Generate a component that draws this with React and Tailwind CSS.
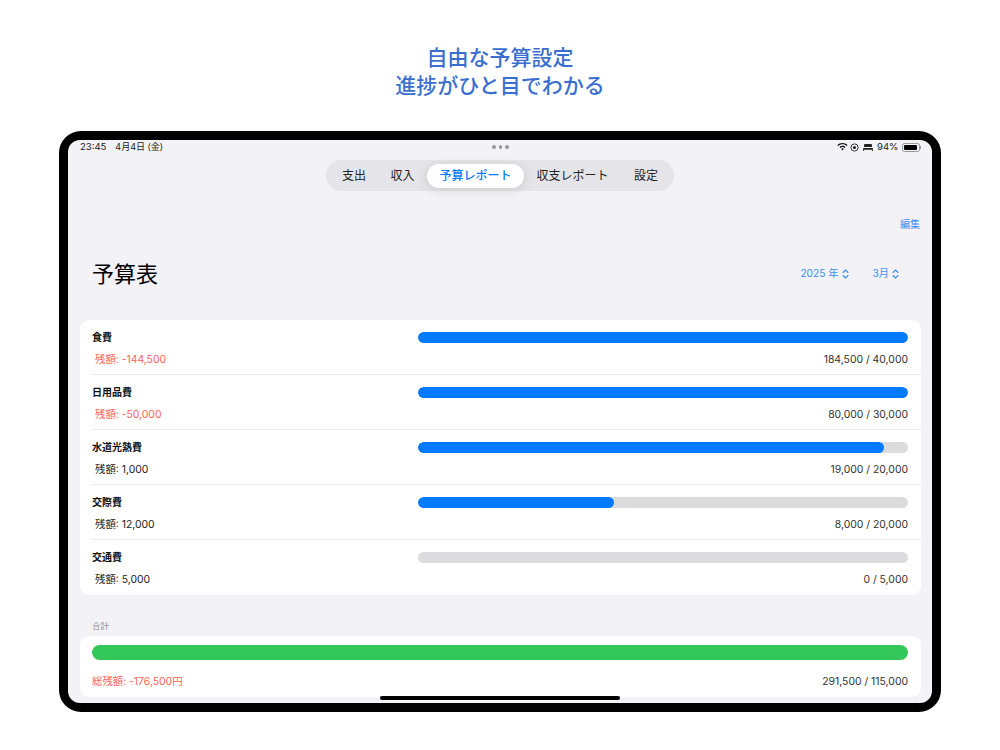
const sans = 'font-["Inter","Noto_Sans_CJK_JP",sans-serif]';

const rows = [
  { name: '食費', left: '残額: -144,500', amount: '184,500 / 40,000', pct: 100, over: true },
  { name: '日用品費', left: '残額: -50,000', amount: '80,000 / 30,000', pct: 100, over: true },
  { name: '水道光熱費', left: '残額: 1,000', amount: '19,000 / 20,000', pct: 95 },
  { name: '交際費', left: '残額: 12,000', amount: '8,000 / 20,000', pct: 40 },
  { name: '交通費', left: '残額: 5,000', amount: '0 / 5,000', pct: 0 },
];

const tabs = [
  { label: '支出', width: 'w-[48px]' },
  { label: '収入', width: 'w-[49px]' },
  { label: '予算レポート', width: 'w-[97px]', active: true },
  { label: '収支レポート', width: 'w-[97px]' },
  { label: '設定', width: 'w-[50px]' },
];

function UpDown() {
  return (
    <svg width="7" height="10" viewBox="0 0 7 10" fill="none" stroke="#3d8fef" strokeWidth="1.1" strokeLinecap="round" strokeLinejoin="round">
      <path d="M1 3.5 3.5 1 6 3.5" />
      <path d="M1 6.5 3.5 9 6 6.5" />
    </svg>
  );
}

function StatusIcons() {
  return (
    <div className="flex items-center justify-end text-[10px] leading-none text-[#222]">
      <svg width="11" height="8" viewBox="0 0 12 9" fill="#111">
        <path d="M6 0C3.8 0 1.8.8.2 2.3l1 1.1C2.5 2.1 4.2 1.4 6 1.4s3.5.7 4.8 2l1-1.1C10.2.8 8.2 0 6 0Z" />
        <path d="M6 3c-1.3 0-2.5.5-3.4 1.4l1 1.1C4.2 4.9 5.1 4.5 6 4.5s1.8.4 2.4 1l1-1.1C8.500 3.500 7.300 3 6 3Z" />
        <path d="M6 6c-.6 0-1.1.2-1.5.6L6 8.500l1.500-1.900C7.100 6.200 6.600 6 6 6Z" />
      </svg>
      <svg className="ml-[2px]" width="9" height="9" viewBox="0 0 10 10" fill="none" stroke="#222" strokeWidth="1">
        <circle cx="5" cy="5" r="4" />
        <circle cx="5" cy="5" r="1.7" fill="#222" stroke="none" />
      </svg>
      <svg className="ml-[4px]" width="10" height="7" viewBox="0 0 11 8" fill="#222">
        <path d="M2 0h7a1 1 0 0 1 1 1v2.500H1V1a1 1 0 0 1 1-1Z" />
        <path d="M0 4.500h11V8H10V6.500H1V8H0Z" />
      </svg>
      <span className="ml-[4px] w-[20px] text-[9.500px]">94%</span>
      <div className="ml-[5px] flex items-center">
        <div className="h-[9px] w-[18px] rounded-[2.500px] border border-[#999] p-[1px]">
          <div className="h-full w-[93%] rounded-[1px] bg-black" />
        </div>
        <div className="h-[3px] w-[1px] bg-[#999]" />
      </div>
    </div>
  );
}

function BudgetRow({ row, last }) {
  return (
    <div className={`ml-[12.500px] flex h-[55px] flex-col pr-[12.500px] ${last ? '' : 'border-b border-[#ededf0]'}`}>
      <div className="mt-[12px] flex h-[11px] items-center">
        <span className="w-[326px] text-[10px] font-bold text-[#111]">{row.name}</span>
        <div className="h-[11px] flex-1 overflow-hidden rounded-full bg-[#dcdcde]">
          <div className="h-full rounded-full bg-[#007aff]" style={{ width: `${row.pct}%` }} />
        </div>
      </div>
      <div className="mt-[11px] flex items-center justify-between text-[10.400px] leading-[11px]">
        <span className={`ml-[3px] ${row.over ? 'text-[#ff5f57]' : 'text-[#222]'}`}>{row.left}</span>
        <span className="text-[#333]">{row.amount}</span>
      </div>
    </div>
  );
}

export default function App() {
  return (
    <div className={`h-[750px] w-[1000px] overflow-hidden bg-white ${sans}`}>
      <h1 className="h-[131px] pt-[42px] text-center font-['Noto_Sans_CJK_JP',sans-serif] text-[21px] leading-[28px] font-medium text-[#3a6fd0]">
        自由な予算設定
        <br />
        進捗がひと目でわかる
      </h1>

      <div className="relative mx-[59px] h-[581px] rounded-[22px] bg-black p-[9px]">
        <div className="h-[563px] overflow-hidden rounded-[12px] bg-[#f2f2f7]">
          {/* status bar */}
          <div className="grid h-[13px] grid-cols-[1fr_auto_1fr] items-center pt-[1px] pl-[12px] pr-[11px]">
            <span className="flex gap-[9px] text-[9.500px] leading-none text-[#222]">
              <span>23:45</span>
              <span className="text-[9px]">4月4日 (金)</span>
            </span>
            <div className="flex gap-[3px]">
              <span className="h-[3.500px] w-[3.500px] rounded-full bg-[#999]" />
              <span className="h-[3.500px] w-[3.500px] rounded-full bg-[#999]" />
              <span className="h-[3.500px] w-[3.500px] rounded-full bg-[#999]" />
            </div>
            <StatusIcons />
          </div>

          {/* tabs */}
          <div className="mt-[7px] flex justify-center">
            <div className="flex h-[31px] w-[348px] items-center rounded-full bg-[#e4e4e9] pl-[4px] text-[12px]">
              {tabs.map((t) => (
                <span
                  key={t.label}
                  className={
                    t.active
                      ? `flex h-[24px] items-center justify-center rounded-full bg-white pt-[1px] font-medium text-[#007aff] shadow-[0_2px_12px_rgba(0,0,0,0.12)] ${t.width}`
                      : `flex items-center justify-center pt-[1px] text-[#222] ${t.width}`
                  }
                >
                  {t.label}
                </span>
              ))}
            </div>
          </div>

          <div className="mt-[27px] pr-[12px] text-right text-[10px] leading-[12px] text-[#3d8fef]">編集</div>

          <div className="mt-[24px] flex h-[40px] items-center justify-between pl-[24px] pr-[33px]">
            <h2 className="text-[22px] leading-none font-normal text-black">予算表</h2>
            <div className="flex items-center gap-[24px] text-[10.200px] text-[#3d8fef]">
              <span className="flex items-center gap-[3px]">2025 年 <UpDown /></span>
              <span className="flex items-center gap-[3px]">3月 <UpDown /></span>
            </div>
          </div>

          <div className="mx-[11.500px] mt-[26px] rounded-[9px] bg-white">
            {rows.map((r, i) => (
              <BudgetRow key={r.name} row={r} last={i === rows.length - 1} />
            ))}
          </div>

          <div className="mt-[26px] pl-[24px] text-[8.500px] leading-[10px] text-[#8e8e93]">合計</div>

          <div className="mx-[11.500px] mt-[5px] h-[61px] rounded-[9px] bg-white px-[12.500px] pt-[9px]">
            <div className="h-[15px] rounded-full bg-[#34c759]" />
            <div className="mt-[16px] flex items-center justify-between text-[10.400px] leading-[11px]">
              <span className="text-[#ff5f57]">総残額: -176,500円</span>
              <span className="text-[#333]">291,500 / 115,000</span>
            </div>
          </div>
        </div>

        {/* home indicator */}
        <div className="absolute bottom-[12px] left-[321px] h-[4px] w-[240px] rounded-full bg-black" />
      </div>
    </div>
  );
}
